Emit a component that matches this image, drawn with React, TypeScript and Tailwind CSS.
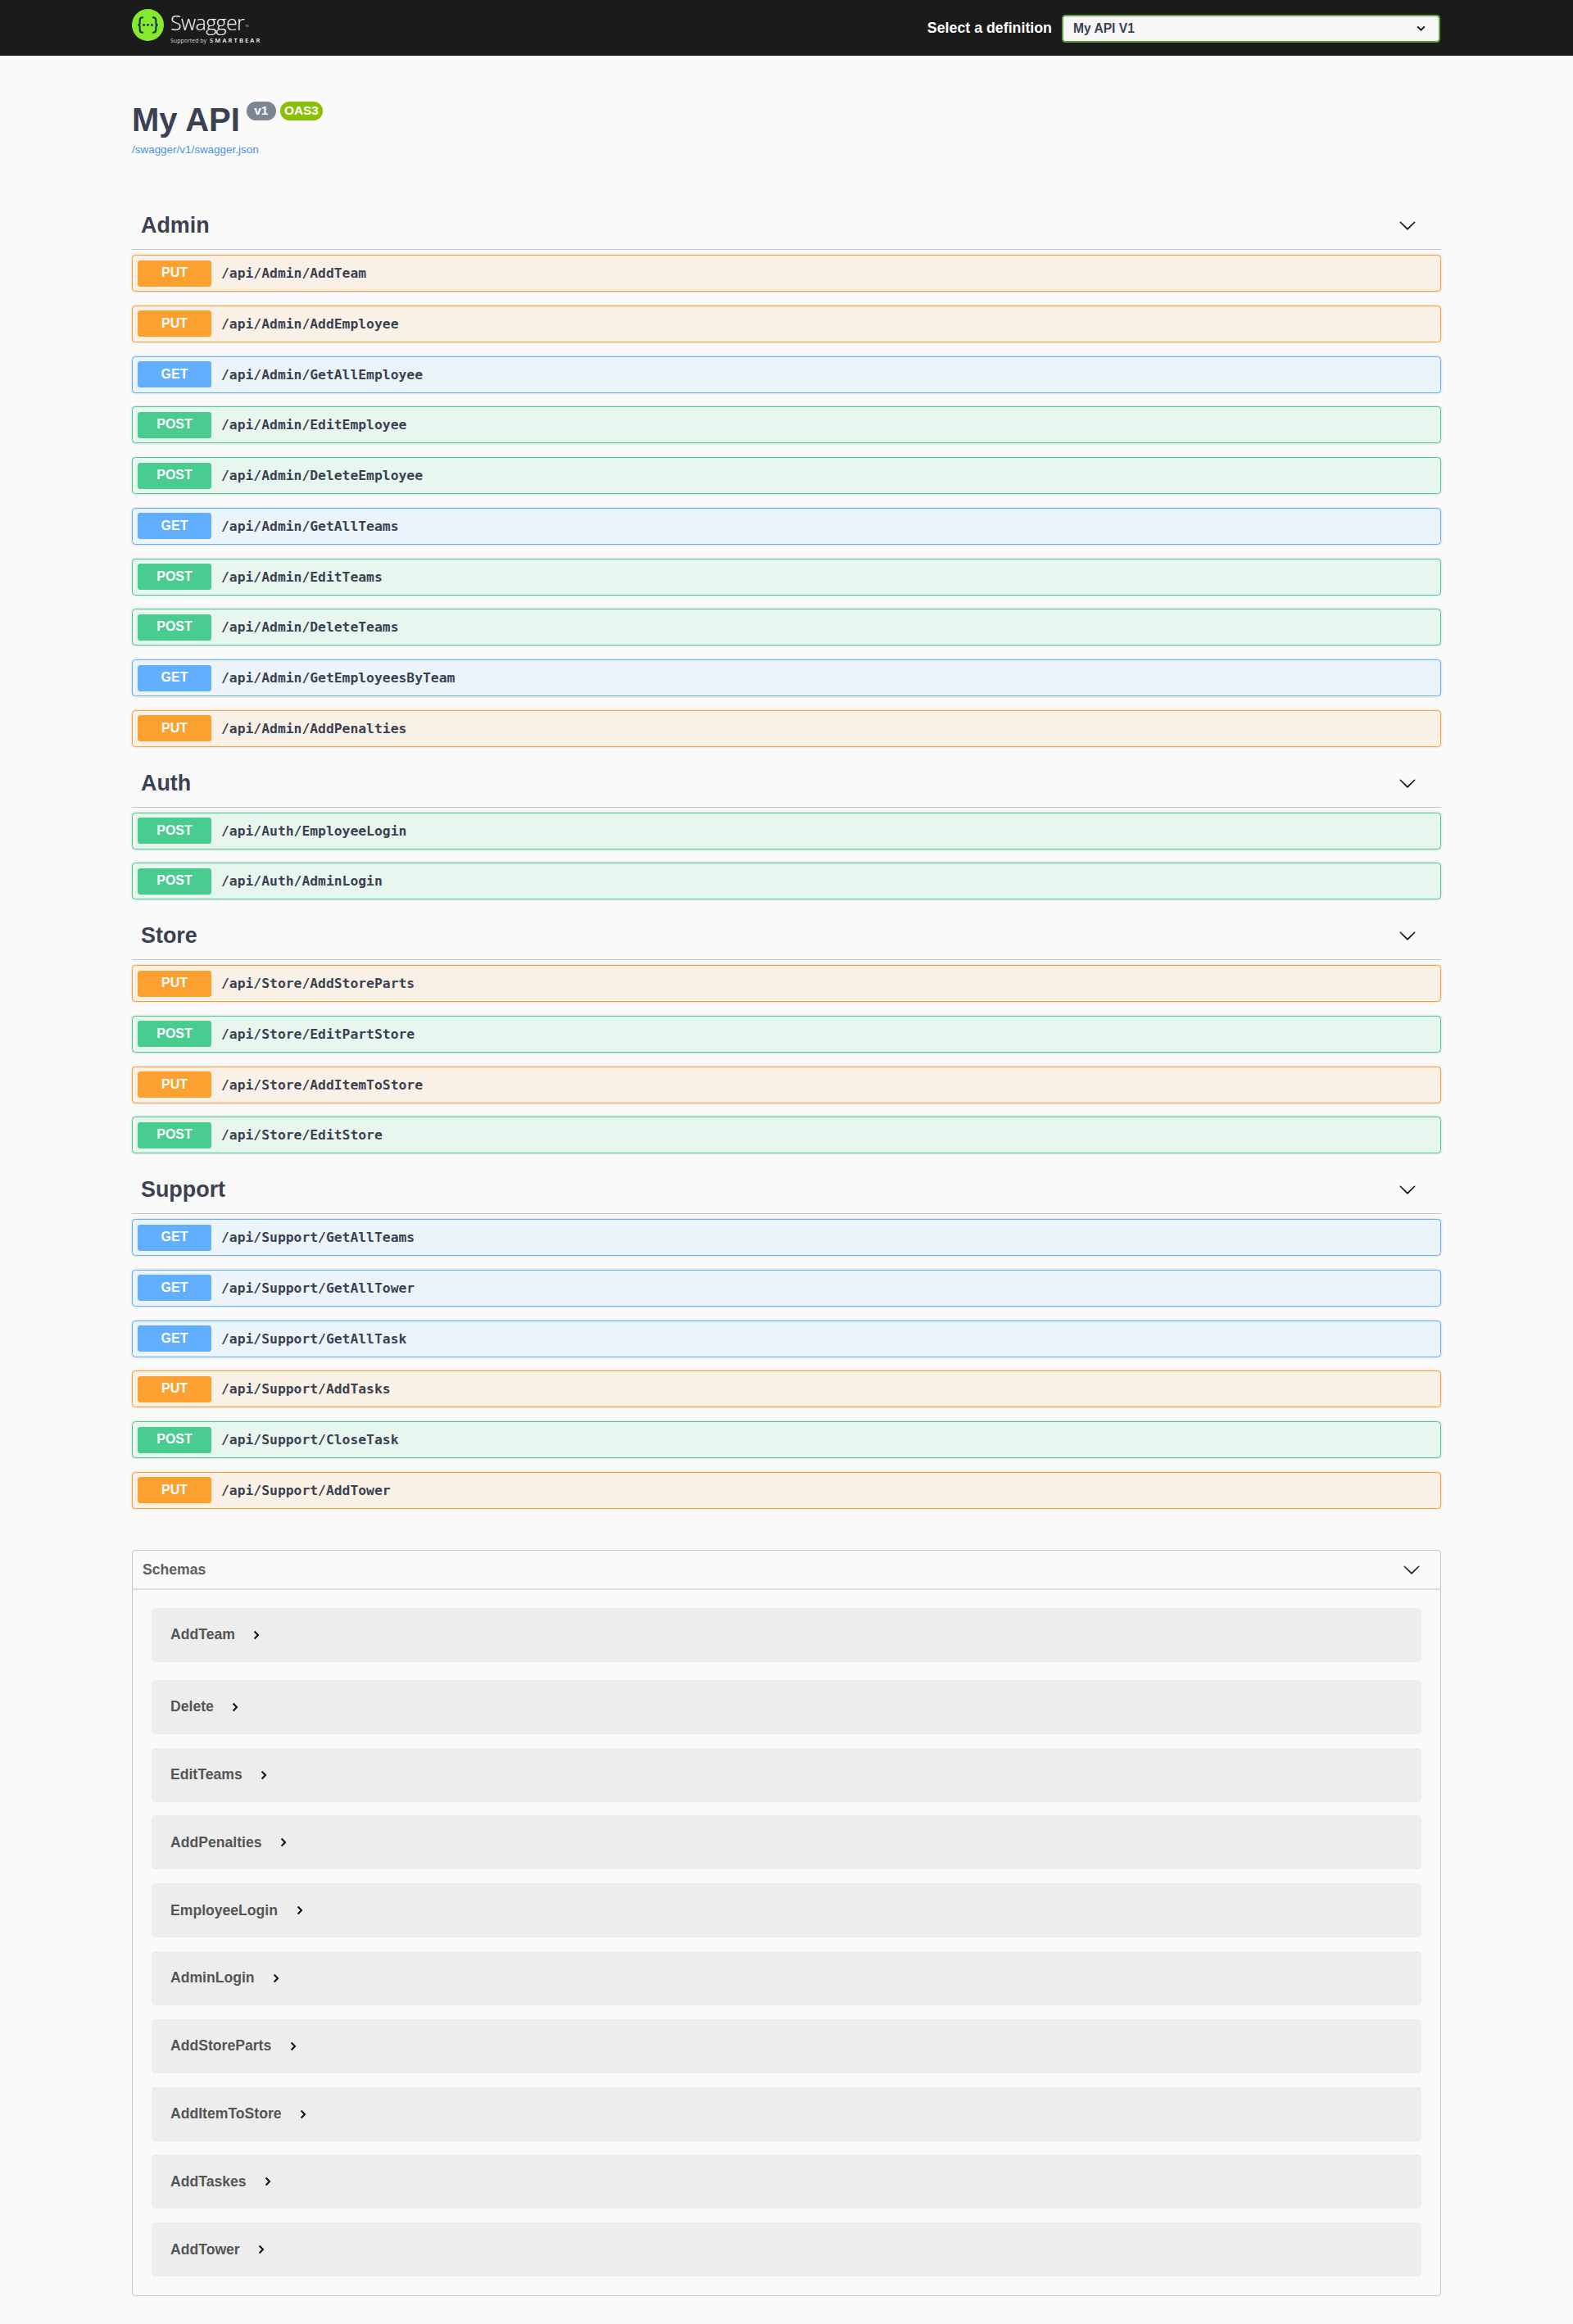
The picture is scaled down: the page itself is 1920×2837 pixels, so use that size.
import React from "react";

type Method = "PUT" | "GET" | "POST";

const methodStyles: Record<Method, { row: string; badge: string }> = {
  PUT: { row: "bg-[#faf1e6] border-[#fca130]", badge: "bg-[#fca130]" },
  GET: { row: "bg-[#ebf3fb] border-[#61affe]", badge: "bg-[#61affe]" },
  POST: { row: "bg-[#e8f6f0] border-[#49cc90]", badge: "bg-[#49cc90]" },
};

const sections: { name: string; ops: [Method, string][] }[] = [
  {
    name: "Admin",
    ops: [
      ["PUT", "/api/Admin/AddTeam"],
      ["PUT", "/api/Admin/AddEmployee"],
      ["GET", "/api/Admin/GetAllEmployee"],
      ["POST", "/api/Admin/EditEmployee"],
      ["POST", "/api/Admin/DeleteEmployee"],
      ["GET", "/api/Admin/GetAllTeams"],
      ["POST", "/api/Admin/EditTeams"],
      ["POST", "/api/Admin/DeleteTeams"],
      ["GET", "/api/Admin/GetEmployeesByTeam"],
      ["PUT", "/api/Admin/AddPenalties"],
    ],
  },
  {
    name: "Auth",
    ops: [
      ["POST", "/api/Auth/EmployeeLogin"],
      ["POST", "/api/Auth/AdminLogin"],
    ],
  },
  {
    name: "Store",
    ops: [
      ["PUT", "/api/Store/AddStoreParts"],
      ["POST", "/api/Store/EditPartStore"],
      ["PUT", "/api/Store/AddItemToStore"],
      ["POST", "/api/Store/EditStore"],
    ],
  },
  {
    name: "Support",
    ops: [
      ["GET", "/api/Support/GetAllTeams"],
      ["GET", "/api/Support/GetAllTower"],
      ["GET", "/api/Support/GetAllTask"],
      ["PUT", "/api/Support/AddTasks"],
      ["POST", "/api/Support/CloseTask"],
      ["PUT", "/api/Support/AddTower"],
    ],
  },
];

const models = [
  "AddTeam",
  "Delete",
  "EditTeams",
  "AddPenalties",
  "EmployeeLogin",
  "AdminLogin",
  "AddStoreParts",
  "AddItemToStore",
  "AddTaskes",
  "AddTower",
];

function ArrowDown({ className }: { className: string }) {
  return (
    <svg viewBox="0 0 20 20" className={className} fill="currentColor">
      <path d="M17.418 6.109c.272-.268.709-.268.979 0s.271.701 0 .969l-7.908 7.83c-.27.268-.707.268-.979 0l-7.908-7.83c-.27-.268-.27-.701 0-.969.271-.268.709-.268.979 0L10 13.25l7.418-7.141z" />
    </svg>
  );
}

function ArrowRight() {
  return (
    <svg viewBox="0 0 8 12" className="w-[8px] h-[12px]" fill="none" stroke="#111" strokeWidth="2.1">
      <path d="M1.6 1.4L6 6l-4.4 4.6" />
    </svg>
  );
}

function Logo() {
  return (
    <div className="flex items-start gap-[8px] mt-[-3px]">
      <svg viewBox="0 0 40 40" className="w-[39px] h-[39px]">
        <circle cx="20" cy="20" r="20" fill="#85ea2d" />
        <g fill="none" stroke="#173647" strokeWidth="2.2" strokeLinecap="round">
          <path d="M13.5 10.5c-3 0-3.6 1.4-3.6 3.6v3.4c0 1.6-.9 2.5-2.4 2.5 1.5 0 2.4.9 2.4 2.5v3.4c0 2.2.6 3.6 3.6 3.6" />
          <path d="M26.5 10.5c3 0 3.6 1.4 3.6 3.6v3.4c0 1.6.9 2.5 2.4 2.5-1.5 0-2.4.9-2.4 2.5v3.4c0 2.2-.6 3.6-3.6 3.6" />
        </g>
        <circle cx="15" cy="20" r="1.5" fill="#173647" />
        <circle cx="20" cy="20" r="1.5" fill="#173647" />
        <circle cx="25" cy="20" r="1.5" fill="#173647" />
      </svg>
      <div className="flex flex-col text-white font-['Open_Sans',sans-serif] pt-[2px]">
        <div className="flex items-end h-[29px]">
          <span className="text-[25px] leading-[29px] font-light tracking-[-0.6px]">Swagger</span>
          <span className="text-[3px] leading-[3px] mb-[8px] ml-[1px] text-[#bbb]">TM</span>
        </div>
        <div className="flex items-center gap-[4px] h-[11px] mt-[2px]">
          <span className="text-[7px] leading-[11px] text-[#d0d0d0]">Supported by</span>
          <span className="text-[7.6px] leading-[11px] font-semibold tracking-[2.1px]">SMARTBEAR</span>
        </div>
      </div>
    </div>
  );
}

function OpRow({ method, path }: { method: Method; path: string }) {
  const s = methodStyles[method];
  return (
    <div className={`flex items-center h-[45px] mb-[16.75px] pl-[6px] border rounded-[4.4px] shadow-[0_0_3px_rgba(0,0,0,0.19)] ${s.row}`}>
      <div className={`w-[90px] h-[32px] rounded-[3.3px] flex items-center justify-center pb-[1px] text-white text-[16px] font-bold font-['Liberation_Sans',sans-serif] ${s.badge}`}>
        {method}
      </div>
      <span className="ml-[12px] pt-[2px] text-[16.35px] font-semibold text-[#3b4151] font-['DejaVu_Sans_Mono',monospace]">{path}</span>
    </div>
  );
}

export default function App() {
  return (
    <div className="min-h-[2837px] bg-[#fafafa] font-['Liberation_Sans',sans-serif] text-[#3b4151]">
      <header className="h-[68px] bg-[#1b1b1b]">
        <div className="w-[1598px] mx-auto h-full flex items-center justify-between pt-[1px]">
          <Logo />
          <div className="flex items-center pr-[1px]">
            <span className="text-[17.8px] font-bold text-white mr-[12px]">Select a definition</span>
            <div className="w-[462px] h-[34px] bg-[#f7f7f7] border-2 border-[#62a03f] rounded-[4.4px] flex items-center justify-between pl-[12px] pr-[16px]">
              <span className="text-[15.6px] font-bold text-[#3b4151]">My API V1</span>
              <svg viewBox="0 0 12 8" className="w-[11px] h-[7px]" fill="none" stroke="#111" strokeWidth="2">
                <path d="M1 1.5l5 5 5-5" />
              </svg>
            </div>
          </div>
        </div>
      </header>

      <main className="w-[1598px] mx-auto">
        <div className="pt-[55px] h-[180px]">
          <div className="flex items-start h-[46px]">
            <h2 className="text-[40px] leading-[46px] font-bold">My API</h2>
            <span className="ml-[8px] mt-[1px] h-[23px] w-[36px] rounded-[12px] bg-[#7d8492] text-white text-[15.4px] font-bold leading-[22px] text-center">v1</span>
            <span className="ml-[5px] mt-[1px] h-[23px] w-[52px] rounded-[12px] bg-[#89bf04] text-white text-[15.4px] font-bold leading-[22px] text-center">OAS3</span>
          </div>
          <div className="mt-[5px] text-[13.45px] leading-[18px] text-[#4990e2]">/swagger/v1/swagger.json</div>
        </div>

        {sections.map((sec) => (
          <section key={sec.name}>
            <div className="h-[57px] mb-[6px] border-b border-[#c3c5c9] flex items-center justify-between pl-[11px] pr-[30px] pb-[2px]">
              <h3 className="text-[26.9px] font-bold leading-[32px]">{sec.name}</h3>
              <ArrowDown className="w-[22px] h-[22px] text-[#111]" />
            </div>
            {sec.ops.map(([m, p]) => (
              <OpRow key={p} method={m} path={p} />
            ))}
          </section>
        ))}

        <section className="mt-[50.4px] h-[911px] border border-[#c8c8c8] rounded-[4.4px] shadow-[0_0_1px_rgba(0,0,0,0.15)]">
          <div className="h-[48px] flex items-center justify-between pl-[12px] pr-[24px] border-b-2 border-[#dedede]">
            <h4 className="text-[17.6px] font-bold text-[#606060] pt-[1px]">Schemas</h4>
            <ArrowDown className="w-[22px] h-[22px] text-[#222]" />
          </div>
          <div className="px-[23px] pt-[21.7px] flex flex-col">
            {models.map((m, i) => (
              <div
                key={m}
                className={`h-[66px] shrink-0 rounded-[4.4px] bg-[#ededed] flex items-center pl-[23px] gap-[22.5px] ${i === 0 ? "mb-[22px]" : "mb-[16.8px]"}`}
              >
                <span className="text-[17.6px] font-bold text-[#555] pb-[1px]">{m}</span>
                <ArrowRight />
              </div>
            ))}
          </div>
        </section>
      </main>
    </div>
  );
}
